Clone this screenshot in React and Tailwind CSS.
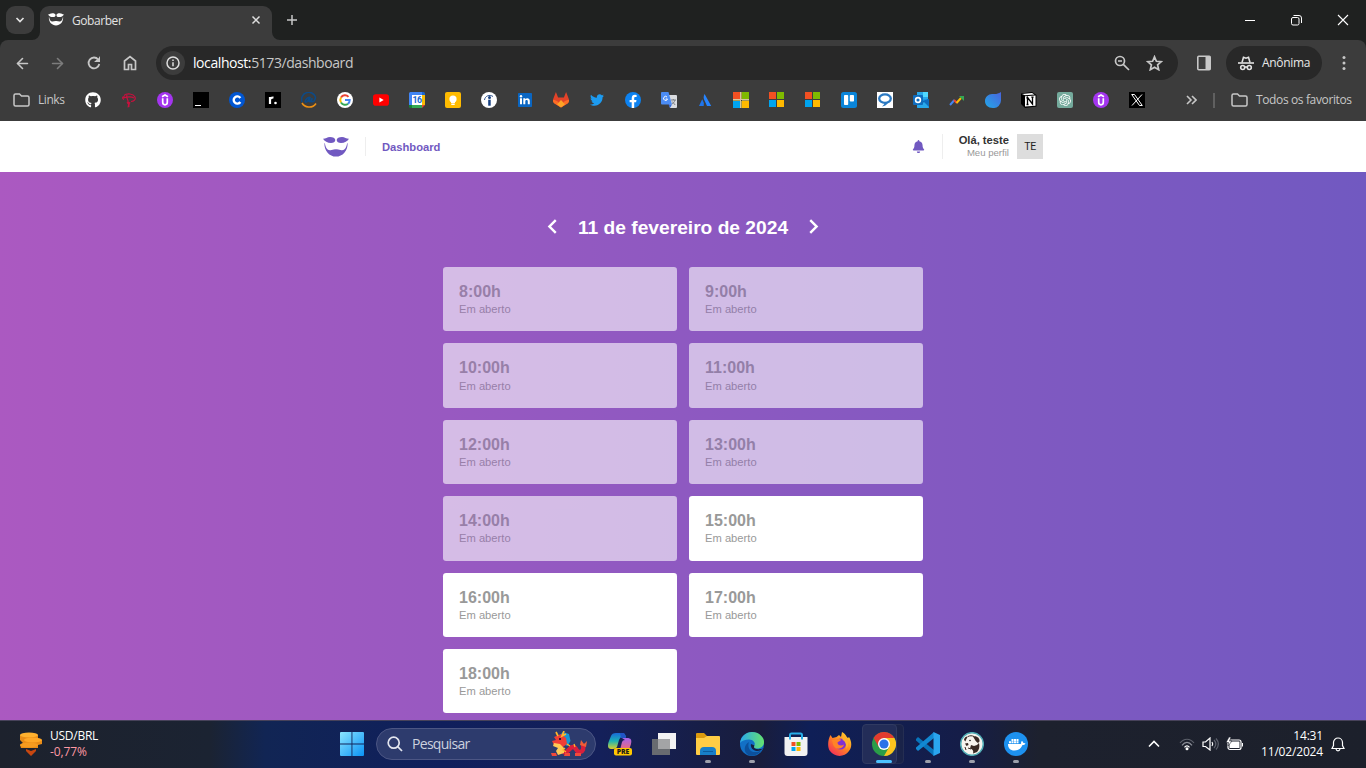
import React from "react";
import { FaGithub, FaGitlab, FaTwitter, FaFacebook, FaBell } from "react-icons/fa";
import { MdChevronLeft, MdChevronRight } from "react-icons/md";
import { SiOpenai } from "react-icons/si";
import { ArrowLeft, ArrowRight } from "lucide-react";

const UI = "font-['Open_Sans','Noto_Sans',sans-serif]";

function Face({ className }) {
  return (
    <svg className={className} viewBox="0 0 26 20" fill="currentColor">
      <path d="M0 1.800C2.500 2 4 0 7 0c2.800 0 5.300 1 5.300 3S10.500 6 8 6C4.500 6 1.500 4.500 0 1.800z" />
      <path d="M26 1.800C23.500 2 22 0 19 0c-2.800 0-5.300 1-5.300 3S15.500 6 18 6c3.500 0 6.500-1.500 8-4.200z" />
      <path d="M1.900 6.200c.6 4 2.200 6.900 5 7 2.200.2 3.800-1.200 6.100-.8 2.300-.4 3.900 1 6.100.8 2.800-.1 4.400-3 5-7h.5c.3 7.600-5 13.400-11.600 13.400S1.100 13.800 1.400 6.200z" />
    </svg>
  );
}

function Svg({ children, size = 16, box = 16 }) {
  return (
    <svg width={size} height={size} viewBox={`0 0 ${box} ${box}`} fill="none" className="block shrink-0">
      {children}
    </svg>
  );
}

const Udemy = () => (
  <Svg>
    <circle cx="8" cy="8" r="8" fill="#a435f0" />
    <path d="M5 4.700L8 3l3 1.700M5.700 6.300v4c0 3.300 4.600 3.300 4.600 0v-4" stroke="#fff" strokeWidth="1.700" />
  </Svg>
);

const Windows = () => (
  <Svg>
    <path fill="#f25022" d="M0 0h7v7H0z" />
    <path fill="#7fba00" d="M8 0h7v7H8z" />
    <path fill="#00a4ef" d="M0 8h7v7H0z" />
    <path fill="#ffb900" d="M8 8h7v7H8z" />
  </Svg>
);

const bookmarks = [
  <FaGithub size={16} color="#fff" />,
  <Svg>
    <path d="M4 5C1 4 1 7 3 7.500M3 3.500c3-2.500 9-2 11 1.500 1 2.500-1 4.500-4 4.500M2.500 6c4-1.500 8-1.500 10.500 0M6 3c-1.500 3 1.500 4 1 7" stroke="#c8103e" strokeWidth="1.200" />
    <path d="M5.500 10.500c1.500-1 3-1 4 0L8.500 13v2l-2 .5.500-3z" fill="#c8103e" />
  </Svg>,
  <Udemy />,
  <Svg>
    <path fill="#000" d="M0 0h16v16H0z" />
    <path fill="#fff" d="M2 13h6v1H2z" />
  </Svg>,
  <Svg>
    <circle cx="8" cy="8" r="8" fill="#0056d2" />
    <path d="M11.300 6A3.600 3.600 0 1 0 11.300 10" stroke="#fff" strokeWidth="2.400" />
  </Svg>,
  <Svg>
    <path fill="#000" d="M0 0h16v16H0z" />
    <path d="M5 12V5M5 8c0-2 1.500-2.600 3.500-2.500" stroke="#fff" strokeWidth="2.200" />
    <circle cx="10.500" cy="11" r="1.300" fill="#fff" />
  </Svg>,
  <Svg>
    <path d="M1 10A7 7 0 0 1 14.500 5M4 10c.5-4 4-5 5-4.500L8 9.500c1 1 3-1.500 3-3.500l-.5 3.500c2 1 4-1.500 4-4.500M4 10c1.500 1 3-1 4.500-4" stroke="#0d4a86" strokeWidth="1.600" />
    <path d="M1 11c2.500 4.500 10 6 14 .5" stroke="#ec9014" strokeWidth="1.600" />
  </Svg>,
  <Svg>
    <circle cx="8" cy="8" r="8" fill="#fff" />
    <path d="M11.500 4.800A4.700 4.700 0 0 0 4 5.500" stroke="#ea4335" strokeWidth="2" />
    <path d="M4 5.500a4.800 4.800 0 0 0 0 5" stroke="#fbbc05" strokeWidth="2" />
    <path d="M4 10.500a4.700 4.700 0 0 0 7 1.200" stroke="#34a853" strokeWidth="2" />
    <path d="M8 8h4.700c0 1.600-.6 2.800-1.700 3.700" stroke="#4285f4" strokeWidth="2" />
  </Svg>,
  <Svg>
    <rect y="2.300" width="16" height="11.400" rx="2.800" fill="#f00" />
    <path d="M6.400 5.600v4.800L10.700 8z" fill="#fff" />
  </Svg>,
  <Svg>
    <path fill="#4285f4" d="M0 1.500Q0 0 1.500 0H13v3H3v10H0z" />
    <path fill="#1967d2" d="M13 0h1.500Q16 0 16 1.500V3h-3z" />
    <path fill="#fbbc04" d="M13 3h3v10h-3z" />
    <path fill="#34a853" d="M3 13h10v3H3z" />
    <path fill="#188038" d="M0 13h3v3H1.500Q0 16 0 14.500z" />
    <path fill="#ea4335" d="M13 13h3l-3 3z" />
    <path fill="#fff" d="M3 3h10v10H3z" />
    <text x="8" y="11.200" textAnchor="middle" fontSize="8.800" fontWeight="700" letterSpacing="-.5" fill="#1967d2" className="font-['Roboto',sans-serif]">16</text>
  </Svg>,
  <Svg>
    <rect width="16" height="16" rx="2" fill="#fb0" />
    <circle cx="8" cy="7" r="3.600" fill="#fff" />
    <path fill="#fff" d="M6 8h4v3H6zM6.300 11.600h3.400V13H6.300z" />
  </Svg>,
  <Svg>
    <circle cx="8" cy="8" r="8" fill="#fff" />
    <path d="M3.500 8C4 4 8.500 2 12 4.500" stroke="#164081" strokeWidth=".9" />
    <circle cx="8.500" cy="5.600" r="1.500" fill="#164081" />
    <path fill="#164081" d="M7.200 7.700h2.500v6H7.200z" />
  </Svg>,
  <Svg>
    <rect x="1" y="1" width="14" height="14" rx=".8" fill="#0a66c2" />
    <path fill="#fff" d="M3 6.300h2v6H3zM6.300 6.300h2v1c1.300-1.800 4.500-1.400 4.500 1.500v3.500h-2V9.200c0-1.700-2.500-1.700-2.500 0v3.100h-2z" />
    <circle cx="4" cy="4.300" r="1.200" fill="#fff" />
  </Svg>,
  <Svg>
    <path fill="#e24329" d="M2.900 0L0 7.500c-.2 1.500.3 3 1.500 4L8 15.500l6.500-4c1.200-1 1.700-2.500 1.500-4L13.100 0l-2.200 5.500H5.100z" />
    <path fill="#fc6d26" d="M0 8c2 0 3.500.6 5 1.700l3 5.800-6.500-4C.3 10.600-.2 9.500 0 8zM16 8c-2 0-3.500.6-5 1.700l-3 5.800 6.500-4c1.200-.9 1.700-2 1.500-3.500z" />
    <path fill="#fca326" d="M8 8l4 4.300-4 3.200-4-3.200z" />
  </Svg>,
  <FaTwitter size={14} color="#1d9bf0" />,
  <Svg>
    <circle cx="8" cy="8" r="8" fill="#0d82f0" />
    <path fill="#fff" d="M6.700 16v-5.700H4.600V8h2.100V6.200C6.700 3.900 8 2.800 9.900 2.800l1.700.1v2h-1.100c-1 0-1.300.5-1.300 1.300V8h2.300l-.4 2.300H9.200V16z" />
  </Svg>,
  <Svg>
    <path fill="#dadce0" d="M6 3h9q1 0 1 1v11q0 1-1 1H9z" />
    <path fill="#4b8cf5" d="M1 0h6.500L11 12.500H1q-1 0-1-1V1q0-1 1-1z" />
    <path fill="#3367d6" d="M7.500 12.500H11L9 16z" />
    <path d="M6 5A2 2 0 1 0 6.500 7H4.700" stroke="#fff" />
    <path d="M10 8h5M12.300 7v1M14 8c-.5 2-2 3.500-3 4M11.200 9.500l3 3.500" stroke="#70757a" strokeWidth=".9" />
  </Svg>,
  <Svg>
    <path fill="#2684ff" d="M7.600 2Q5.500 5.500 8 9.500l2 4.500h4.200z" />
    <path fill="#1f75ec" d="M5.200 7.200L2 14h4.700Q7.500 10.500 5.200 7.200z" />
  </Svg>,
  <Svg>
    <path fill="#f25022" d="M0 0h7v7H0z" />
    <path fill="#7fba00" d="M9 0h7v7H9z" />
    <path fill="#00a4ef" d="M0 9h7v7H0z" />
    <path fill="#ffb900" d="M9 9h7v7H9z" />
    <path d="M7.500 0v16M0 7.500h16" stroke="#d8c79f" />
    <path d="M8.500 0v7M8.500 9v7M0 8.500h7M9 8.500h7" stroke="#a99a50" />
  </Svg>,
  <Windows />,
  <Windows />,
  <Svg>
    <rect width="16" height="16" rx="2.500" fill="#0a85d9" />
    <rect x="3" y="3" width="4.200" height="10" rx=".8" fill="#fff" />
    <rect x="8.800" y="3" width="4.200" height="6.500" rx=".8" fill="#fff" />
  </Svg>,
  <Svg>
    <path fill="#fff" d="M0 0h16v16H0z" />
    <ellipse cx="8" cy="6.600" rx="5.800" ry="4.300" stroke="#2b79c2" strokeWidth="2.300" />
    <path fill="#2b79c2" d="M8 10l3 .8c-1 2-3 3.200-6 3.700 1.500-1.200 2.700-2.500 3-4.500z" />
  </Svg>,
  <Svg>
    <path fill="#28a8ea" d="M4 0h11v8H4z" />
    <path fill="#50d9ff" d="M10 0h5v5h-5z" />
    <path fill="#1490df" d="M4 8l12-1v9H5q-1 0-1-1z" />
    <path fill="#0a4f99" d="M9 10l7 6V7z" />
    <path fill="#28a8ea" d="M4 13l12-5v7q0 1-1 1H5q-1 0-1-1z" />
    <path fill="#0f6cbd" d="M10 9l6 6V7z" />
    <rect y="3" width="10" height="10" rx="1" fill="#0f6cbd" />
    <circle cx="5" cy="8" r="2.400" stroke="#fff" strokeWidth="1.600" />
  </Svg>,
  <Svg>
    <path d="M1 13l4.500-5" stroke="#4285f4" strokeWidth="2" />
    <path d="M5 8l3 3" stroke="#ea4335" strokeWidth="2" />
    <path d="M7.500 11L12 6" stroke="#fbbc04" strokeWidth="2" />
    <path d="M10 4h5v5z" fill="#34a853" />
  </Svg>,
  <Svg>
    <defs>
      <linearGradient id="drop" x1="0" y1="1" x2="1" y2="0">
        <stop stopColor="#22a8e8" />
        <stop offset="1" stopColor="#4a62dc" />
      </linearGradient>
    </defs>
    <path fill="url(#drop)" d="M16 0v8.500A7.500 7.500 0 0 1 8 16C3 16 0 13 0 9c0-4.500 4-7.500 8-7 3 .4 5-.2 8-2z" />
  </Svg>,
  <Svg>
    <path fill="#000" d="M0 1.500L11 0l4.500 3v11.500L4 16 0 12z" />
    <path fill="#fff" d="M1 2l10-.9 2.500 1.500-9.500.6zM4 4.200l10.500-.8v10.300L4 14.500z" />
    <path d="M6.500 12.500v-7l5 6.500V5M5.300 5.800h2.200M10.300 5.200h2.300M5.500 12.500h2" stroke="#000" strokeWidth="1.300" />
  </Svg>,
  <span className="flex size-4 items-center justify-center rounded-[2px] bg-[#74aa9c]">
    <SiOpenai size={12} color="#fff" />
  </span>,
  <Udemy />,
  <Svg>
    <path fill="#000" d="M0 0h16v16H0z" />
    <path d="M2.700 2.500h2.800l7.800 11h-2.800zM13 2.500L3 13.500" stroke="#fff" />
  </Svg>,
];

const Folder = () => (
  <svg width="17" height="14" viewBox="0 0 17 14" fill="none" stroke="#c7c7c7" strokeWidth="1.500" className="shrink-0">
    <path d="M1 11.500v-9Q1 1 2.500 1h4l2 2h6q1.500 0 1.500 1.500v7Q16 13 14.500 13h-12Q1 13 1 11.500z" />
  </svg>
);

function TitleBar() {
  return (
    <div className="flex h-10 bg-[#1f2120] pl-1.5">
      <button className="mt-1.5 flex size-7 items-center justify-center rounded-[9px] bg-[#3c3c3c]">
        <svg width="10" height="8" viewBox="0 0 10 8" fill="none" stroke="#e3e3e3" strokeWidth="1.700">
          <path d="M1.500 2L5 5.500 8.500 2" />
        </svg>
      </button>
      <div className="relative ml-1.5 mt-1.5 flex h-[34px] w-[232px] items-start rounded-t-[9px] bg-[#3c3c3c] pl-2">
        <svg className="absolute -left-2 bottom-0 size-2" viewBox="0 0 8 8"><path fill="#3c3c3c" d="M8 0v8H0A8 8 0 0 0 8 0z" /></svg>
        <svg className="absolute -right-2 bottom-0 size-2" viewBox="0 0 8 8"><path fill="#3c3c3c" d="M0 0v8h8A8 8 0 0 1 0 0z" /></svg>
        <Face className="mt-[7px] h-[13px] w-4 text-white" />
        <span className={`${UI} ml-2 mt-[6px] w-[52px] text-[12px] leading-[18px] tracking-[-0.43px] text-[#e3e3e3]`}>Gobarber</span>
        <svg className="ml-auto mr-[11px] mt-[9px]" width="10" height="10" viewBox="0 0 10 10" stroke="#dedede" strokeWidth="1.500">
          <path d="M1.500 1.500l7 7m0-7l-7 7" />
        </svg>
      </div>
      <svg className="ml-[14px] mt-[14px]" width="12" height="12" viewBox="0 0 12 12" stroke="#c7c7c7" strokeWidth="1.500">
        <path d="M6 1v10M1 6h10" />
      </svg>
      <div className="ml-auto mr-[17px] mt-[14px] flex gap-[35px]">
        <svg width="12" height="12" viewBox="0 0 12 12" stroke="#fff"><path d="M1 6.500h10" /></svg>
        <svg width="11" height="12" viewBox="0 0 11 12" fill="none" stroke="#fff">
          <rect x=".5" y="3.500" width="7.500" height="7.500" rx="1.500" />
          <path d="M2.500 1.500h5.500q2.500 0 2.500 2.500v5" />
        </svg>
        <svg width="12" height="12" viewBox="0 0 12 12" stroke="#fff" strokeWidth="1.100"><path d="M1 1l10 10m0-10L1 11" /></svg>
      </div>
    </div>
  );
}

function Toolbar() {
  return (
    <div className="bg-[#1f2120]">
      <div className="flex h-[46px] items-center rounded-t-[8px] bg-[#3c3c3c] pl-[14px]">
        <ArrowLeft size={17} color="#c7c7c7" strokeWidth={2.300} />
        <ArrowRight size={17} color="#7c7c7c" strokeWidth={2.300} className="ml-[18px]" />
        <svg className="ml-5" width="16" height="16" viewBox="0 0 16 16" fill="none" stroke="#c7c7c7" strokeWidth="1.800">
          <path d="M13.300 9A5.400 5.400 0 1 1 12.200 4.500" />
          <path d="M14 1v6H8L10.800 4.500 12 4z" fill="#c7c7c7" stroke="none" />
        </svg>
        <svg className="ml-5" width="16" height="16" viewBox="0 0 16 16" fill="none" stroke="#c7c7c7" strokeWidth="1.700">
          <path d="M2.500 14.500V6L8 1.700 13.500 6v8.500h-4V9.500h-3v5z" />
        </svg>
        <div className="ml-[18px] flex h-[34px] w-[1022px] items-center rounded-full bg-[#282828] pl-[5px]">
          <span className="flex size-6 items-center justify-center rounded-full bg-[#3c3c3c]">
            <svg width="14" height="14" viewBox="0 0 14 14" fill="none" stroke="#dedede" strokeWidth="1.500">
              <circle cx="7" cy="7" r="6" /><path d="M7 6.200v4M7 3.500v1.500" />
            </svg>
          </span>
          <span className={`${UI} ml-2 text-[14px] leading-5 tracking-[-0.42px] text-[#c7c7c7]`}><span className="text-white">localhost:</span>5173/dashboard</span>
          <svg className="ml-auto" width="16" height="16" viewBox="0 0 16 16" fill="none" stroke="#c7c7c7" strokeWidth="1.700">
            <circle cx="6" cy="6" r="4.500" /><path d="M9.300 9.300L15 15M4 6h4" />
          </svg>
          <svg className="ml-4 mr-[15px]" width="17" height="16" viewBox="0 0 17 16" fill="none" stroke="#c7c7c7" strokeWidth="1.700">
            <path d="M8.500 1.800l1.900 4.500 4.900.4-3.700 3.200 1.100 4.800-4.200-2.500-4.200 2.500 1.100-4.800L1.700 6.700l4.900-.4z" />
          </svg>
        </div>
        <svg className="ml-[19px]" width="14" height="16" viewBox="0 0 14 16">
          <rect x=".8" y="1.300" width="12.400" height="13.400" rx="1" fill="none" stroke="#c7c7c7" strokeWidth="1.600" />
          <path fill="#c7c7c7" d="M8.500 1h4.700v14H8.500z" />
        </svg>
        <div className="ml-[15px] flex h-[34px] w-[96px] items-center rounded-full bg-[#282828] pl-3">
          <svg width="16" height="15" viewBox="0 0 16 15" fill="none" stroke="#e3e3e3" strokeWidth="1.600">
            <path d="M0 7h16" />
            <path d="M4 6.500L5.500 1.300l2.500.9 2.500-.9L12 6.500" />
            <circle cx="4.700" cy="11.500" r="2" /><circle cx="11.300" cy="11.500" r="2" /><path d="M6.600 11h2.800" />
          </svg>
          <span className={`${UI} ml-[8px] text-[12px] leading-[18px] tracking-[-0.3px] text-[#e8e8e8]`}>Anônima</span>
        </div>
        <svg className="ml-5" width="4" height="16" viewBox="0 0 4 16" fill="#c7c7c7">
          <circle cx="2" cy="2.500" r="1.500" /><circle cx="2" cy="8" r="1.500" /><circle cx="2" cy="13.500" r="1.500" />
        </svg>
      </div>
    </div>
  );
}

function Bookmarks() {
  return (
    <div className={`${UI} flex h-[35px] items-center bg-[#3c3c3c] pb-[7px] text-[12px] text-[#c7c7c7]`}>
      <div className="ml-[13px] flex w-[72px] shrink-0 items-center">
        <Folder />
        <span className="ml-2 leading-4 tracking-[-0.45px]">Links</span>
      </div>
      <div className="flex gap-5">
        {bookmarks.map((icon, i) => (
          <span key={i} className="flex size-4 items-center justify-center">{icon}</span>
        ))}
      </div>
      <svg className="ml-[41px]" width="11" height="10" viewBox="0 0 11 10" fill="none" stroke="#c7c7c7" strokeWidth="1.600">
        <path d="M1 1l4 4-4 4M6 1l4 4-4 4" />
      </svg>
      <span className="ml-4 h-[15px] w-[2px] bg-[#606060]" />
      <span className="ml-4 flex"><Folder /></span>
      <span className="ml-[8px] whitespace-nowrap leading-4 tracking-[-0.37px]">Todos os favoritos</span>
    </div>
  );
}

function Header() {
  return (
    <header className="flex h-[51px] items-center bg-white px-[323px]">
      <Face className="h-5 w-[26px] text-[#7159c1]" />
      <span className="ml-4 h-[19px] w-px bg-[#eee]" />
      <span className="ml-4 mt-px text-[11.2px] font-bold text-[#7159c1]">Dashboard</span>
      <FaBell className="ml-auto" size={13} color="#7159c1" />
      <span className="ml-[17px] h-[25px] w-px bg-[#eee]" />
      <div className="ml-4 text-right">
        <div className="text-[11.2px] font-bold leading-[13px] text-[#333]">Olá, teste</div>
        <div className="text-[9.6px] leading-[12px] text-[#999]">Meu perfil</div>
      </div>
      <span className="ml-2 flex h-[25px] w-[26px] items-center justify-center bg-[#ddd] font-['Roboto',sans-serif] text-[10.5px] tracking-[-0.4px] text-[#222]">TE</span>
    </header>
  );
}

const hours = [8, 9, 10, 11, 12, 13, 14, 15, 16, 17, 18];

function Schedule() {
  return (
    <main className="flex h-[548px] flex-col items-center overflow-hidden bg-[linear-gradient(-90deg,#7159c1,#ab59c1)]">
      <div className="mt-10 flex h-[30px] items-center text-white">
        <MdChevronLeft size={29} className="mb-px" />
        <h1 className="mx-[11px] mt-px text-[19.2px] font-bold leading-[22px]">11 de fevereiro de 2024</h1>
        <MdChevronRight size={29} className="mb-px" />
      </div>
      <div className="mt-[25px] grid w-[480px] grid-cols-2 gap-3">
        {hours.map((h) => (
          <div key={h} className={`h-[64.4px] rounded-[3.2px] bg-white pl-4 pt-4 text-[#999] ${h < 15 ? "opacity-60" : ""}`}>
            <div className="text-[16px] font-bold leading-[18px]">{h}:00h</div>
            <div className="mt-[2.2px] text-[11.2px] leading-[13px]">Em aberto</div>
          </div>
        ))}
      </div>
    </main>
  );
}

const StartLogo = () => (
  <Svg size={24} box={24}>
    <defs>
      <linearGradient id="start" x2="1" y2="1">
        <stop stopColor="#8be5ff" /><stop offset="1" stopColor="#0a92f5" />
      </linearGradient>
    </defs>
    <path fill="url(#start)" d="M1 0h10.500v11.400H0V1q0-1 1-1zM12.400 0H23q1 0 1 1v10.400H12.400zM0 12.400h11.500V24H1q-1 0-1-1zM12.400 12.400H24V23q0 1-1 1H12.400z" />
  </Svg>
);

const Dragon = () => (
  <svg width="36" height="26" viewBox="0 0 36 26" fill="none">
    <path d="M12 21c5 2 6-5 10-5 4 0 3 6 7 5 3-.5 4-3 3-8" stroke="#d81f3c" strokeWidth="4.500" />
    <path d="M29 14l1-5 3 4 3-3-1 6z" fill="#ef5e36" />
    <path d="M7 6l5-5 6 2 1.500 7-3 5-5-2z" fill="#1597d4" />
    <path d="M3 6l7-3 5 4 1 6-4 3-9-2-2-4 4-1z" fill="#ef3e36" />
    <path d="M5 1l2 4M13 0l-2 5 4-2" stroke="#ffb629" strokeWidth="1.700" />
    <path d="M3 12l6 1 4 4v5l-6 2-2-4 2-3-5-2z" fill="#ffca55" />
    <path d="M8 8h2" stroke="#331733" strokeWidth="2" />
    <path d="M0 22h5l1 3H1zM14 22h5v3h-6zM24 22h6v3h-6z" fill="#f1493b" />
    <path d="M14 17l-2 2 3 2M16 13l3 2M23 13l1 3" stroke="#ffb629" strokeWidth="1.300" />
  </svg>
);

const Copilot = () => (
  <svg width="24" height="24" viewBox="0 0 24 24" fill="none">
    <defs>
      <linearGradient id="cpa" x2="0" y2="1"><stop stopColor="#1969d8" /><stop offset=".5" stopColor="#1ab1b5" /><stop offset="1" stopColor="#d9cf2e" /></linearGradient>
      <linearGradient id="cpb" x2="0" y2="1"><stop stopColor="#a563ef" /><stop offset="1" stopColor="#ef6a72" /></linearGradient>
    </defs>
    <path d="M8 1h7q2 0 3 4h-4q-2 0-3 3l-2 7q-1 2-4 2H3c-3 0-4-3-2-8l2-5q1-3 5-3z" fill="url(#cpa)" />
    <path d="M12 1h3q2 0 3 5h-5z" fill="#2154c7" />
    <path d="M14 6h5c4 0 5 2 4 6l-2 6h-9l2-8q.5-2 3-2z" fill="url(#cpb)" />
    <rect x="6" y="16" width="18" height="7.500" rx="2" fill="#ffc700" />
    <text x="15" y="22.200" textAnchor="middle" fontSize="6.800" fontWeight="800" fill="#1b1b1b" className="font-['Open_Sans',sans-serif]">PRE</text>
  </svg>
);

const TaskView = () => (
  <Svg size={24} box={24}>
    <path fill="#f3f3f3" d="M6 1h18v16H6z" />
    <path fill="#686b70" d="M0 7h18v16H0z" />
    <path fill="#a3a4a6" d="M6 7h12v10H6z" />
  </Svg>
);

const Explorer = () => (
  <Svg size={24} box={24}>
    <path fill="#dc9a0e" d="M0 2q0-1 1-1h7l3 3v4H0z" />
    <path fill="#ffcd45" d="M0 6h8l3-2h12q1 0 1 1v17q0 1-1 1H1q-1 0-1-1z" />
    <path fill="#177fc9" d="M4 19q0-4 4-4h8q4 0 4 4v4H4z" />
    <path fill="#0c5c9e" d="M7 19h10v1H7z" />
  </Svg>
);

const Edge = () => (
  <Svg size={24} box={24}>
    <defs>
      <linearGradient id="edge" x2="1"><stop stopColor="#2aa8ec" /><stop offset="1" stopColor="#65e26d" /></linearGradient>
    </defs>
    <circle cx="12" cy="12" r="12" fill="#1270c6" />
    <path fill="url(#edge)" d="M0 11C1 4 6 0 12 0c7 0 12 5 12 10 0 4-3 6.500-7 6.500-3 0-4.500-1-3-2.500 2.500-3-1-6.500-5-6.500-4 0-7.500 1.500-9 3.500z" />
    <path fill="#0c509c" d="M9 10c-2 5 1 11 7 10 3 0 5-2 6-2.500C18 24 10 25.500 6.500 21.500 3 18 5 12 9 10z" />
    <path fill="#171f42" d="M11 12c-1 3 2 7 6 7 3 0 5-1.500 7-3-3 1.500-7 1.500-9 .5-1.500-1-1-2-.5-3z" />
  </Svg>
);

const Store = () => (
  <Svg size={24} box={24}>
    <path d="M6 8V3q0-1.500 1.500-1.500h9Q18 1.500 18 3v5" stroke="#28aee8" strokeWidth="2" />
    <path fill="#f2f2f2" d="M.5 5h23v16q0 3-3 3h-17q-3 0-3-3z" />
    <path d="M6 5v2.500M18 5v2.500" stroke="#28aee8" strokeWidth="2" />
    <path fill="#f25022" d="M7.500 10h4v4h-4z" /><path fill="#7fba00" d="M12.500 10h4v4h-4z" />
    <path fill="#00a4ef" d="M7.500 15h4v4h-4z" /><path fill="#ffb900" d="M12.500 15h4v4h-4z" />
  </Svg>
);

const Firefox = () => (
  <Svg size={24} box={24}>
    <defs>
      <linearGradient id="fox" x1="1" y1="0" x2=".2" y2="1"><stop stopColor="#ffe536" /><stop offset=".5" stopColor="#ff8a1f" /><stop offset="1" stopColor="#f52c5b" /></linearGradient>
    </defs>
    <path fill="url(#fox)" d="M2.500 3l2 3 4-1L11 3l2 2 1-5c5 3 4 5 6 6l1-1c3 5 3 10 0 14-5 7-15 6-19 0-3-4-2-12 .5-16z" />
    <circle cx="12.500" cy="12" r="5.500" fill="#8030d2" />
    <path fill="#ff8426" d="M4 8c3 0 7-2 9-.500-.5 2-3.500 2-3.500 3.500 1 3 4.500 3 6.500 1.500-1 5-9 6-11 0z" />
    <path fill="#ffb12c" d="M15 4c6 3 6 9 3.500 13 0-4-1-8-4-9z" />
  </Svg>
);

const Chrome = () => (
  <Svg size={24} box={24}>
    <circle cx="12" cy="12" r="12" fill="#2a9d48" />
    <path fill="#e33b2e" d="M1.600 6A12 12 0 0 1 22.400 6H12L6.800 15z" />
    <path fill="#fcc31e" d="M22.400 6A12 12 0 0 1 12 24l5.200-9L12 6z" />
    <circle cx="12" cy="12" r="6" fill="#fff" /><circle cx="12" cy="12" r="4.600" fill="#2b72e8" />
  </Svg>
);

const VSCode = () => (
  <Svg size={24} box={24}>
    <path fill="#0874bb" d="M0 7l2-2 16 13v6L0 8.500z" />
    <path fill="#1288d2" d="M0 17l2 2L18 6V0L0 15.500z" />
    <path fill="#2aa5ee" d="M17.500 0L24 3v18l-6.500 3z" />
  </Svg>
);

const Beaver = () => (
  <Svg size={24} box={24}>
    <circle cx="12" cy="12" r="11.300" fill="#f7f4ee" stroke="#51adb6" strokeWidth="1.500" />
    <path fill="#382923" d="M4 8c0-2 2-4 4-3.500C7 6 6 7 5.500 9.500zM13 4.500c4-1 7 2 6.500 5l-1.500 1.500c-2-1-3-3-5-6.500zM11 13l3 1 3-1 2-2c1 4 0 7-2 9l-4 1.500c1-3-1-4.500-3-5z" />
    <path d="M8 4.500c2-1 4-1 6 0" stroke="#382923" />
    <circle cx="10" cy="8.500" r=".8" fill="#111" /><path fill="#382923" d="M5 11.500l3-.5.5 2-2 1z" /><path d="M5 15l1 3M8 16l3 1" stroke="#382923" />
  </Svg>
);

const Docker = () => (
  <Svg size={24} box={24}>
    <circle cx="12" cy="12" r="12" fill="#1d91f0" />
    <path fill="#fff" d="M4 12h12c1 0 1.500-.5 1-2l1-1c1 .5 1.300 1.200 1.300 2 1-.2 1.700 0 2.200.4-.6 1.200-1.700 1.600-3 1.600-1.500 3.500-4 5.500-8 5.500C6 18.500 4 16 4 12zM5 9.300h2v2H5zM7.500 9.300h2v2h-2zM10 9.300h2v2h-2zM12.500 9.300h2v2h-2zM7.500 6.900h2v2h-2zM10 6.900h2v2h-2zM12.500 6.900h2v2h-2z" />
  </Svg>
);

const apps = [
  { el: <Explorer />, open: true },
  { el: <Edge />, open: true },
  { el: <Store /> },
  { el: <Firefox /> },
  { el: <Chrome />, active: true },
  { el: <VSCode />, open: true },
  { el: <Beaver />, open: true },
  { el: <Docker />, open: true },
];

function Taskbar() {
  return (
    <footer className={`${UI} flex h-12 border-t border-[#47425a] bg-[linear-gradient(90deg,#1d222d_0px,#1b2332_210px,#112554_265px,#101f5c_440px,#14205a_600px,#191d3c_760px,#0f1f57_810px,#151d48_960px,#1d212e_1040px,#1c202b_1366px)] text-white`}>
      <div className="flex w-[340px] shrink-0 items-start pl-5 pt-[11px]">
        <svg width="22" height="24" viewBox="0 0 22 24">
          <path fill="#e98c17" d="M0 3h18v4l4 1v4l-4 1v3H1l-1-3 3-2-3-3z" />
          <ellipse cx="9" cy="3" rx="9" ry="2.500" fill="#ffb12e" />
          <ellipse cx="13" cy="8" rx="9" ry="2.500" fill="#ffa726" />
          <ellipse cx="9" cy="13" rx="9" ry="2.500" fill="#f69b1f" />
          <path fill="#c84710" d="M6 17l5 2 5-2v2l-5 5-5-5z" />
        </svg>
        <div className="ml-2 mt-[-4px] text-[12px] leading-4">
          <div className="tracking-[-0.25px]">USD/BRL</div>
          <div className="tracking-[-0.1px] text-[#ff99a4]">-0,77%</div>
        </div>
      </div>
      <div className="flex h-full items-center pb-px">
        <StartLogo />
      </div>
      <div className="ml-3 mt-[7px] flex h-8 w-[220px] items-center rounded-full border border-[#4c5684] bg-[#2d3b6d] pl-[10px]">
        <svg width="16" height="16" viewBox="0 0 16 16" fill="none" stroke="#e3e6ef" strokeWidth="1.700">
          <circle cx="6.700" cy="6.700" r="5.500" /><path d="M10.700 10.700L15 15" />
        </svg>
        <span className="ml-[9px] text-[14px] leading-5 tracking-[-0.7px] text-[#ccd1df]">Pesquisar</span>
        <span className="ml-auto mr-[8px]"><Dragon /></span>
      </div>
      <div className="flex items-center gap-5 pb-px pl-3">
        <Copilot />
        <TaskView />
      </div>
      <div className="flex pl-[10px]">
        {apps.map((a, i) => (
          <div key={i} className="relative flex h-[47px] w-11 items-center justify-center pb-px">
            {a.active && <span className="absolute left-1 top-[3px] h-10 w-[38px] rounded-[4px] border border-[#252e52] bg-[#1a2349]" />}
            {a.active && <span className="absolute left-0 top-[3px] h-10 w-[35px] rounded-[4px] border border-[#303a61] bg-[#232d58]" />}
            <span className="relative">{a.el}</span>
            {a.open && <span className="absolute bottom-[5px] left-[19px] h-[3px] w-1.5 rounded-full bg-[#9da0ab]" />}
            {a.active && <span className="absolute bottom-[5px] left-[14px] h-[3px] w-4 rounded-full bg-[#4cc2ff]" />}
          </div>
        ))}
      </div>
      <div className="ml-auto flex items-center pb-px pr-[21px]">
        <svg width="12" height="8" viewBox="0 0 12 8" fill="none" stroke="#fff" strokeWidth="1.600"><path d="M1 6.500l5-5 5 5" /></svg>
        <svg className="ml-[19px]" width="16" height="13" viewBox="0 0 16 13" fill="none" strokeWidth="1.200">
          <path d="M1 5c4-5 10-5 14 0" stroke="#5c606b" /><path d="M3 7.300c3-4 7-4 10 0" stroke="#8b8e97" /><path d="M5.500 9.300c1.500-2 3.500-2 5 0" stroke="#fff" />
          <circle cx="8" cy="10.800" r="1.500" fill="#fff" />
        </svg>
        <svg className="ml-[7px]" width="17" height="14" viewBox="0 0 17 14" fill="none" stroke="#fff" strokeWidth="1.200">
          <path d="M1 5h2.500L8 1v12L3.500 9.500H1z" /><path d="M10 5c1 1.300 1 2.700 0 4" /><path d="M12 3c2.300 2.500 2.300 5.500 0 8M14 1.500c3 3.500 3 7.500 0 11" stroke="#5c606b" />
        </svg>
        <svg className="ml-[7px]" width="18" height="14" viewBox="0 0 18 14" fill="none" stroke="#fff" strokeWidth="1.200">
          <rect x="2" y="3" width="13" height="9.500" rx="2" /><path fill="#fff" d="M3.500 4.500h10v6.500h-10zM16 6h1v3.500h-1z" stroke="none" />
          <path fill="#fff" stroke="#1c202b" strokeWidth=".6" d="M3 0L0 5.500h2.500L2 9l4-5H3.500L5 0z" />
        </svg>
        <div className="ml-4 w-[63px] whitespace-nowrap text-right text-[12px] leading-4 tracking-[-0.17px]">
          <div>14:31</div>
          <div>11/02/2024</div>
        </div>
        <svg className="ml-2" width="14" height="15" viewBox="0 0 14 15" fill="none" stroke="#fff" strokeWidth="1.200">
          <path d="M1 11.500L2.500 8.500V5.500a4.500 4.500 0 0 1 9 0v3L13 11.500zM5 12c.5 2.500 3.500 2.500 4 0" />
        </svg>
      </div>
    </footer>
  );
}

export default function App() {
  return (
    <div className="h-[768px] w-[1366px] overflow-hidden font-['Liberation_Sans',Arial,sans-serif]">
      <TitleBar />
      <Toolbar />
      <Bookmarks />
      <Header />
      <Schedule />
      <Taskbar />
    </div>
  );
}
